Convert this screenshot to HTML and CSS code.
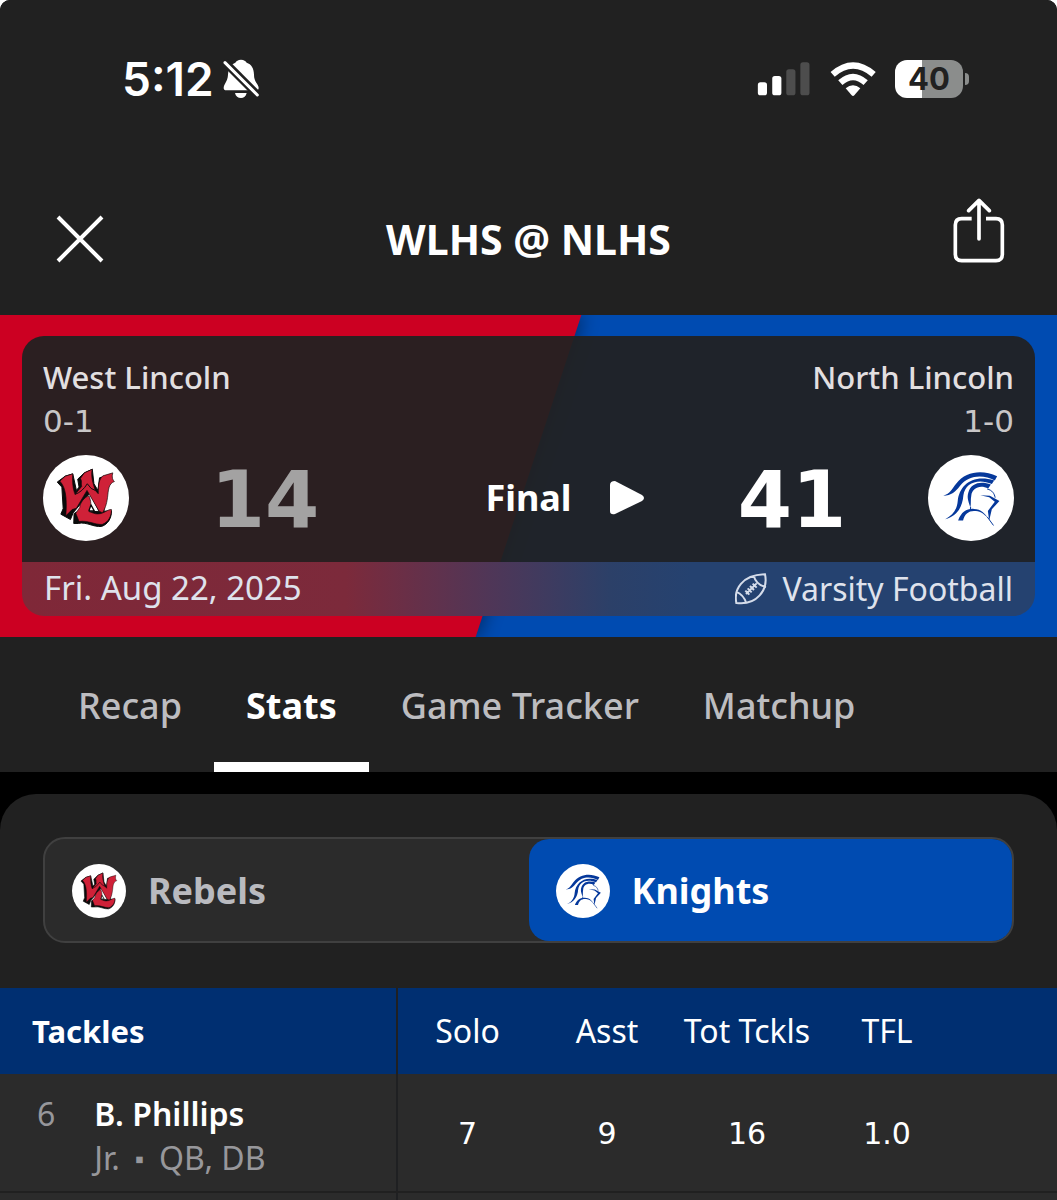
FILE: index.html
```html
<!DOCTYPE html>
<html lang="en">
<head>
<meta charset="utf-8">
<meta name="viewport" content="width=device-width, initial-scale=1">
<title>WLHS @ NLHS</title>
<link rel="stylesheet" href="styles.css">
</head>
<body>
<svg class="sprite" aria-hidden="true">
  <symbol id="rebels" viewBox="39 43 260 260">
    <g stroke-linejoin="round" stroke="#0b0b0b">
      <path fill="#0b0b0b" stroke-width="3" d="M82 125 L106 107 L129 100 L140 150 L148 140 L144 116 L164 97 L188 86 L193 130 L205 150 L210 112 L240 104 L222 218 L208 212 L180 158 L130 218 L122 238 L93 222 L100 205 L96 140 Z"/>
      <path fill="#0b0b0b" stroke-width="3" d="M140 216 L133 220 L132 250 L146 250 C170 244 192 262 216 259 C236 252 246 234 246 212 Z"/>
      <path fill="#cf2138" stroke-width="2" d="M90 122 L106 107 L129 100 C127 126 130 148 136 162 L156 138 C153 128 158 122 152 114 L164 97 L188 86 C183 108 190 128 197 150 L206 160 C206 130 209 116 220 106 L250 97 C246 110 250 120 255 123 C236 130 237 150 234 172 C231 194 226 206 219 218 L208 212 L172 150 L140 204 L127 208 L108 227 C110 195 113 145 90 122 Z"/>
      <path fill="#cf2138" stroke-width="2" d="M178 166 C162 172 151 188 150 202 L138 219 L148 244 C175 240 195 254 218 253 C237 246 246 228 246 208 C235 206 224 221 205 221 C196 222 188 217 178 214 C187 200 184 180 178 166 Z"/>
      <path fill="none" stroke-width="3" d="M136 162 Q158 154 173 130 Q184 148 197 150"/>
      <path fill="#fff" stroke-width="4" d="M184 194 L194 212 L178 211 Z"/>
    </g>
  </symbol>
  <symbol id="knights" viewBox="84 43 258 260">
    <g fill="#05389b">
      <path d="M129 166 C151 160 154 147 168 130 C198 91 248 87 292 107 L285 120 C251 102 207 102 180 136 C166 154 154 166 129 166 Z"/>
      <path d="M135 237 C160 224 171 206 173 181 C178 135 218 99 283 120 L276 131 C235 113 195 127 190 165 C187 204 169 228 135 237 Z"/>
      <path d="M211 202 C208 188 199 174 205 156 C212 129 241 120 273 132 L265 144 C240 131 216 143 214 165 C211 180 214 190 211 202 Z"/>
      <path d="M174 241 C184 214 202 204 222 206 C243 206 256 220 265 235 C250 217 238 212 222 212 C205 212 193 222 189 241 Z"/>
      <path d="M241 165 L270 166 L299 182 L276 207 L268 241 L264 212 L285 184 L268 171 Z"/>
    </g>
    <g fill="none" stroke="#05389b" stroke-width="3">
      <path d="M262 146 C277 149 284 160 286 172"/>
      <path d="M212 200 L211 208"/>
      <path d="M262 230 L281 256"/>
    </g>
  </symbol>
</svg>

<div class="app">
  <header class="top">
    <div class="status">
      <div class="clock">
        <time>5:12</time>
        <svg class="bell" viewBox="368 58 112 120" role="img" aria-label="Silent">
          <path fill="#fff" d="M424 60 C415 60 410 64 407 69 C390 75 386 90 385 105 C384 126 372 133 372 145 Q372 152 380 152 L469 152 Q477 152 477 144 C477 133 463 128 463 105 C463 86 455 73 441 69 C438 64 433 60 424 60 Z M406 160 L441 160 C439 170 432 175 424 175 C415 175 408 170 406 160 Z"/>
          <path stroke="#212121" stroke-width="24" d="M371 63 L483 175"/>
          <path stroke="#fff" stroke-width="9" stroke-linecap="round" d="M376 69 L473 166"/>
        </svg>
      </div>
      <div class="indicators">
        <svg class="signal" viewBox="53 64 162 104" role="img" aria-label="Signal 2 of 4">
          <rect x="54" y="126" width="28" height="40" rx="8" fill="#fff"/>
          <rect x="98" y="107" width="28" height="59" rx="8" fill="#fff"/>
          <rect x="141" y="86" width="28" height="80" rx="8" fill="#4d4d4d"/>
          <rect x="184" y="65" width="28" height="101" rx="8" fill="#4d4d4d"/>
        </svg>
        <svg class="wifi" viewBox="270 62 138 106" role="img" aria-label="Wi-Fi">
          <g fill="none" stroke="#fff" stroke-width="19">
            <path d="M278 101 Q339 48 401 101"/>
            <path d="M301 126 Q339 92 377 126"/>
          </g>
          <path fill="#fff" d="M317 143 Q339 124 361 143 L343 164 Q339 168 335 164 Z"/>
        </svg>
        <div class="battery"><span class="level">40</span><span class="nub"></span></div>
      </div>
    </div>
    <div class="titlebar">
      <button class="icon-button" aria-label="Close">
        <svg class="close" viewBox="0 0 48 48"><path d="M2 2 L46 46 M46 2 L2 46" stroke="#fff" stroke-width="4"/></svg>
      </button>
      <h1>WLHS @ NLHS</h1>
      <button class="icon-button" aria-label="Share">
        <svg class="share" viewBox="67 54 156 198"><g fill="none" stroke="#fff" stroke-width="11" stroke-linecap="round" stroke-linejoin="round"><path stroke-linecap="butt" d="M123 116 H93 Q74 116 74 135 V223 Q74 242 93 242 H196 Q215 242 215 223 V135 Q215 116 196 116 H166"/><path d="M145 177 V62 M114 92 L145 61 L176 92"/></g></svg>
      </button>
    </div>
  </header>

  <section class="hero" aria-label="Score">
    <div class="away-color"></div>
    <div class="scorecard">
      <div class="score-main">
        <div class="team-row"><span>West Lincoln</span><span>North Lincoln</span></div>
        <div class="team-row record"><span>0-1</span><span>1-0</span></div>
        <div class="score-row">
          <svg class="logo"><use href="#rebels"/></svg>
          <span class="score lost">14</span>
          <div class="state">
            <span class="result">Final</span>
            <button class="icon-button" aria-label="Play"><svg class="play" viewBox="0 0 34 34"><path fill="#fff" d="M0 4 Q0 0 5 0 L32 14 Q36 17 32 20 L5 33 Q0 34 0 30 Z"/></svg></button>
          </div>
          <span class="score">41</span>
          <svg class="logo"><use href="#knights"/></svg>
        </div>
      </div>
      <div class="score-foot">
        <span class="date">Fri. Aug 22, 2025</span>
        <span class="sport">
          <svg class="football" viewBox="0 0 96 96"><g fill="none" stroke="#d5dcea" stroke-width="6"><path d="M4 90 C-4 50 20 6 90 4 C100 50 66 98 4 90 Z M3 56 Q26 65 34 91 M56 8 Q64 36 93 42 M33 63 L65 31 M31 53 L43 65 M38 46 L50 58 M45 39 L57 51 M53 32 L65 44"/></g></svg>
          Varsity Football
        </span>
      </div>
    </div>
  </section>

  <nav class="tabs">
    <button>Recap</button>
    <button class="active" aria-current="page">Stats</button>
    <button>Game Tracker</button>
    <button>Matchup</button>
  </nav>

  <main>
    <div class="panel">
      <div class="switch">
        <button><svg class="mini"><use href="#rebels"/></svg>Rebels</button>
        <button class="selected" aria-pressed="true"><svg class="mini"><use href="#knights"/></svg>Knights</button>
      </div>
      <table>
        <colgroup><col class="c-player"><col class="c-stat"><col class="c-stat"><col class="c-stat"><col class="c-stat"><col></colgroup>
        <thead>
          <tr><th class="category" scope="col">Tackles</th><th scope="col">Solo</th><th scope="col">Asst</th><th scope="col">Tot Tckls</th><th scope="col">TFL</th><td></td></tr>
        </thead>
        <tbody>
          <tr>
            <th scope="row"><div class="player"><span class="number">6</span><span><span class="name">B. Phillips</span><span class="meta"><span>Jr.</span><span class="dot">▪</span><span>QB, DB</span></span></span></div></th>
            <td>7</td><td>9</td><td>16</td><td>1.0</td><td></td>
          </tr>
          <tr class="next"><th></th><td></td><td></td><td></td><td></td><td></td></tr>
        </tbody>
      </table>
    </div>
  </main>
</div>
</body>
</html>
```
FILE: styles.css
```css
* { box-sizing: border-box; }
body {
  margin: 0;
  background: #fff;
  color: #fff;
  font-family: "Noto Sans", "Open Sans", sans-serif;
  font-size: 32px;
  line-height: 44px;
}
button {
  margin: 0;
  padding: 0;
  border: 0;
  background: none;
  color: inherit;
  font: inherit;
}
svg { display: block; flex: none; }
.sprite { position: absolute; width: 0; height: 0; }
.app {
  min-height: 100vh;
  background: #000;
  border-radius: 10px 10px 0 0;
  overflow: hidden;
}

.top { background: #212121; padding-top: 47px; }
.status {
  display: flex;
  justify-content: space-between;
  align-items: center;
  height: 64px;
  padding: 0 88px 0 122px;
  font-family: Inter, sans-serif;
}
.clock { display: flex; align-items: center; gap: 8px; font-size: 46px; font-weight: 600; }
.bell { width: 38px; height: 40px; }
.indicators { display: flex; align-items: center; gap: 19px; }
.signal { width: 54px; height: 34px; }
.wifi { width: 46px; height: 36px; }
.battery { display: flex; align-items: center; gap: 2px; }
.level {
  width: 68px;
  height: 38px;
  border-radius: 12px;
  background: linear-gradient(90deg, #fff 40%, #8b8d8c 40%);
  color: #212121;
  font-size: 31px;
  font-weight: 700;
  line-height: 38px;
  text-align: center;
}
.nub { width: 4px; height: 12px; border-radius: 0 4px 4px 0; background: #8b8d8c; }

.titlebar {
  display: grid;
  grid-template-columns: 52px 1fr 52px;
  align-items: center;
  height: 204px;
  padding: 52px 52px 0;
}
.titlebar h1 { margin: 0; font-size: 41px; font-weight: 700; text-align: center; }
.close { width: 48px; height: 48px; margin-left: 4px; }
.share { width: 52px; height: 66px; margin: 0 0 16px 0; }

.hero { position: relative; padding: 21px 22px; background: #004bb1; overflow: hidden; }
.away-color { position: absolute; inset: 0; filter: drop-shadow(4px 0 8px rgba(0, 0, 0, .35)); }
.away-color::before {
  content: "";
  display: block;
  height: 100%;
  background: #cc0022;
  clip-path: polygon(0 0, 55% 0, 45% 100%, 0 100%);
}
.scorecard { position: relative; border-radius: 22px; overflow: hidden; }
.score-main { padding: 19px 21px; background: rgba(33, 33, 33, .94); }
.team-row { display: flex; justify-content: space-between; color: #e2dfe0; font-size: 31px; font-weight: 500; }
.record { color: #c8c6c7; font-family: "DejaVu Sans", sans-serif; font-size: 31px; }
.score-row {
  display: grid;
  grid-template-columns: 86px 28% 1fr 28% 86px;
  align-items: center;
  height: 100px;
  padding-top: 10px;
}
.logo { width: 86px; height: 86px; border-radius: 50%; background: #fff; }
.score { padding-top: 4px; font-family: "DejaVu Sans", sans-serif; font-size: 78px; font-weight: 700; text-align: center; }
.lost { color: #a3a2a2; }
.state { display: grid; grid-template-columns: 1fr auto 1fr; align-items: center; column-gap: 38px; }
.result { grid-column: 2; font-size: 36px; font-weight: 700; }
.play { width: 34px; height: 34px; }
.score-foot {
  display: flex;
  justify-content: space-between;
  height: 54px;
  padding: 4px 22px;
  background: linear-gradient(90deg, #7f2838 0%, #7c2a3b 32%, #503657 46%, #2c4068 58%, #254270 66%);
  color: #dfe2ec;
}
.date { font-size: 33px; }
.sport { display: flex; align-items: center; gap: 15px; }
.football { width: 32px; height: 32px; }

.tabs { display: flex; padding-left: 46px; background: #212121; font-size: 36px; font-weight: 500; color: #bdbdc0; }
.tabs button { height: 135px; padding: 0 32px; border-bottom: 10px solid transparent; border-top: 12px solid transparent; }
.tabs .active { border-bottom-color: #fff; color: #fff; font-weight: 700; }

main { padding-top: 22px; }
.panel { border-radius: 36px 36px 0 0; background: #212121; overflow: hidden; }
.switch {
  display: grid;
  grid-template-columns: 1fr 1fr;
  height: 106px;
  margin: 43px 43px 45px;
  border: 2px solid #404040;
  border-radius: 22px;
  background: #2b2b2b;
}
.switch button {
  display: flex;
  align-items: center;
  gap: 22px;
  padding: 2px 27px 0;
  border-radius: 20px;
  color: #b9babf;
  font-size: 36px;
  font-weight: 700;
}
.switch .selected { background: #004bb1; color: #fff; }
.mini { width: 54px; height: 54px; border-radius: 50%; background: #fff; }

table { width: 100%; table-layout: fixed; border-collapse: collapse; background: #2b2b2b; }
.c-player { width: 397px; }
.c-stat { width: 140px; }
th, td { height: 118px; padding: 0; border-bottom: 2px solid #202020; font-weight: 400; text-align: center; }
td { padding-top: 2px; font-family: "DejaVu Sans", sans-serif; font-size: 30px; }
th:first-child { border-right: 2px solid #1f2022; text-align: left; }
thead th, thead td { height: 86px; border-bottom: 0; background: #002f71; }
thead .category { padding-left: 32px; font-size: 31px; font-weight: 700; }
.player { display: flex; padding: 6px 0 0 37px; gap: 39px; }
.number { color: #97979b; }
.name { display: block; font-weight: 600; }
.meta { display: flex; color: #97979b; }
.dot { padding: 0 15px; font-size: 26px; }
.next th, .next td { height: 8px; border-bottom: 0; }
```
